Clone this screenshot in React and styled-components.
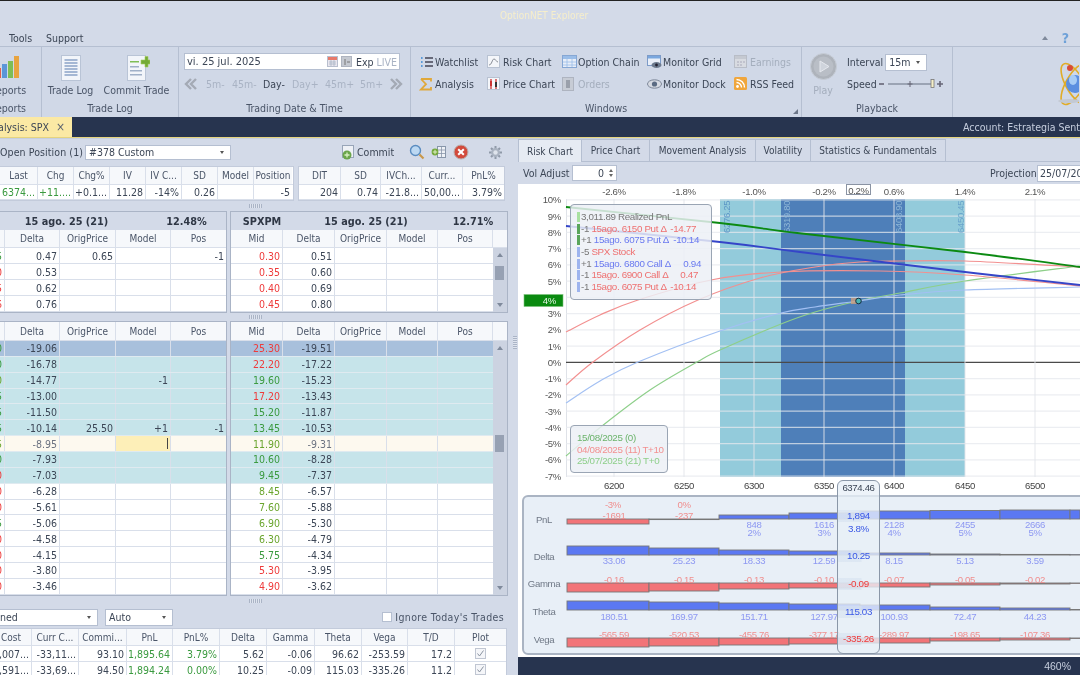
import React from "react";
import styled, { createGlobalStyle } from "styled-components";

const UI = `"DejaVu Sans Condensed", "DejaVu Sans", "Liberation Sans", sans-serif`;
const ARIAL = `"Liberation Sans", Arial, sans-serif`;
const BG = "#d3dae8";
const NAVY = "#27344f";
const GREEN = "#3a9a3f";
const OLIVE = "#6aa52e";
const RED = "#ee3b3b";
const LINE = "#d9dfea";
const AXIS = 9.6;

const Global = createGlobalStyle`
  html, body { margin: 0; padding: 0; background: ${BG}; overflow: hidden; }
  * { box-sizing: border-box; }
`;

const Page = styled.div`
  width: 1080px; height: 675px; overflow: hidden; position: relative;
  display: flex; flex-direction: column; background: ${BG};
  font-family: ${UI}; font-stretch: condensed; font-size: 10.5px; color: #3c4656;
  filter: blur(0.35px);
`;
const TopEdge = styled.div`height: 1px; background: #222; flex: none;`;
const TitleBar = styled.div`
  height: 28px; flex: none; display: flex; align-items: center; justify-content: center;
  color: #f6eecb; font-size: 10px; padding-left: 8px;
`;
const MenuBar = styled.div`
  height: 17px; flex: none; display: flex; align-items: center; gap: 14px; padding: 0 11px 0 9px;
`;
const MenuSpacer = styled.div`flex: 1;`;
const Ribbon = styled.div`
  height: 71px; flex: none; display: flex; border-top: 1px solid #b5bfd1; background: #d0d8e7;
`;
const Group = styled.div`
  width: ${p => p.$w}px; flex: none; border-right: 1px solid ${p => (p.$open ? "transparent" : "#b5bfd1")}; display: flex; flex-direction: column;
  position: relative; overflow: hidden;
`;
const GroupBody = styled.div`flex: 1; display: flex; min-height: 0; padding-left: ${p => p.$pl || 0}px; padding-top: ${p => p.$pt || 0}px;`;
const GroupLabel = styled.div`
  height: 15px; flex: none; text-align: center; line-height: 14px; color: #4a5568; white-space: nowrap;
  margin-bottom: 1px;
  ${p => p.$clip && `display:flex; justify-content:flex-end; padding-right: 15px;`}
`;
const BigButton = styled.div`
  width: ${p => p.$w}px; flex: none; display: flex; flex-direction: column; align-items: center; gap: 3px; padding-top: 8px;
  white-space: nowrap; color: #4a5568;
`;
const ReportButton = styled(BigButton)`gap: 5px;`;
const ClipRight = styled.div`flex: 1; display: flex; justify-content: flex-end; overflow: hidden; padding-right: 3px;`;
const DateWrap = styled.div`display: flex; flex-direction: column; padding: 6px 0 0 5px; width: 100%;`;
const DateBox = styled.div`
  width: 216px; height: 17px; background: #fff; border: 1px solid #b5bfd1; display: flex; align-items: center;
  padding: 0 2px; gap: 3px; color: #3c4656; font-size: 11px;
`;
const Live = styled.span`color: #a9b3c4; font-size: 10.5px;`;
const Exp = styled.span`font-size: 10.5px; margin-left: 1px;`;
const Grow = styled.div`flex: 1;`;
const Stepper = styled.div`
  display: grid; grid-template-columns: 22px 26px 31px 29px 33px 35px 29px 20px; margin-top: 5px; height: 17px; align-items: center;
  justify-items: start; color: #a9b3c4; white-space: nowrap; margin-left: 0;
`;
const Step = styled.span`color: ${p => (p.$on ? "#3c4656" : "#a9b3c4")};`;
const WinGrid = styled.div`
  display: grid; grid-template-columns: 68px 75px 85px 87px 64px; grid-template-rows: 22px 22px;
  padding: 4px 0 0 8px; align-items: center;
`;
const WinItem = styled.div`
  display: flex; align-items: center; gap: 1px; white-space: nowrap; color: ${p => (p.$off ? "#a4aebd" : "#3c4656")};
`;
const Launcher = styled.div`
  position: absolute; right: 3px; bottom: 3px; width: 0; height: 0;
  border-left: 5px solid transparent; border-bottom: 5px solid #6d7789;
`;
const PlayCol = styled.div`
  width: 42px; display: flex; flex-direction: column; align-items: center; padding: 6px 0 0 0; color: #a4aebd; gap: 4px;
`;
const PlayRows = styled.div`padding: 6px 0 0 3px; display: flex; flex-direction: column; gap: 4px;`;
const PlayRow = styled.div`display: flex; align-items: center; gap: 2px; height: 18px; white-space: nowrap;`;
const Combo = styled.div`
  width: ${p => p.$w}px; height: ${p => p.$h || 17}px; background: #fff; border: 1px solid #b5bfd1; display: flex; align-items: center; justify-content: space-between;
  padding: 0 6px 0 3px; flex: none; white-space: nowrap; color: #3c4656; font-size: 10.5px;
`;
const Caret = styled.span`
  width: 0; height: 0; border-left: 2.5px solid transparent; border-right: 2.5px solid transparent; border-top: 3px solid #555;
`;
const NavBar = styled.div`
  height: 20px; flex: none; background: ${NAVY}; display: flex; justify-content: space-between; align-items: stretch; color: #c6cede;
`;
const NavTab = styled.div`
  width: 72px; background: #fbe9a4; color: #3c4656; display: flex; align-items: center; justify-content: flex-end;
  overflow: hidden; padding-right: 7px; gap: 7px; white-space: nowrap;
`;
const NavClose = styled.span`font-size: 12px; color: #5a6270;`;
const Account = styled.div`width: 117px; white-space: nowrap; line-height: 20px; overflow: hidden;`;
const GoldEdge = styled.div`height: 2px; flex: none; background: #e5d47f; border-bottom: 1px solid #c6cfdf;`;
const Main = styled.div`flex: 1; display: flex; min-height: 0;`;
const LeftPane = styled.div`width: 511px; flex: none; display: flex; flex-direction: column; overflow: hidden;`;
const VSplit = styled.div`
  width: 7px; flex: none; display: flex; align-items: center; justify-content: center; padding-bottom: 130px;
`;
const Grip = styled.div`
  width: ${p => (p.$v ? 4 : 13)}px; height: ${p => (p.$v ? 13 : 4)}px; flex: none;
  background: repeating-linear-gradient(${p => (p.$v ? "0deg" : "90deg")}, #aab4c6 0 1px, #dfe4ee 1px 2px);
`;
const PosBar = styled.div`
  height: 26px; flex: none; display: flex; align-items: center; white-space: nowrap; padding-right: 8px;
`;
const PosLabel = styled.span`width: 85px; flex: none; letter-spacing: 0.1px;`;
const CommitBtn = styled.div`display: flex; align-items: center; gap: 2px; margin-left: 109px; width: 63px; color: #3c4656;`;
const ToolIcons = styled.div`display: flex; align-items: center; gap: 6px; margin-left: 12px;`;
const Gear = styled.div`margin-left: 19px; display: flex;`;
const QuoteRow = styled.div`display: flex; gap: 4px; height: 35px; flex: none; margin-top: 1px;`;
const QuoteTable = styled.div`
  width: ${p => p.$w}px; flex: none; border: 1px solid #c3cbdb; ${p => p.$cut && "border-left: 0;"} background: #fff;
`;
const Row = styled.div`
  display: grid; grid-template-columns: ${p => p.$cols}; height: ${p => p.$h || 16}px;
  background: ${p => p.$bg || "#fff"}; border-bottom: 1px solid ${p => p.$line || LINE};
  color: ${p => p.$fg || "#3c4656"};
`;
const Cell = styled.div`
  display: flex; align-items: center; overflow: hidden; white-space: nowrap; justify-content: flex-end;
  padding: 0 2px; border-right: 1px solid ${LINE}; color: ${p => p.$c || "inherit"};
  background: ${p => p.$bg || "transparent"}; font-size: 10.5px; position: relative;
  &:last-child { border-right: 0; }
`;
const CenterCell = styled(Cell)`justify-content: center;`;
const HeadCell = styled(Cell)`
  justify-content: ${p => (p.$left ? "flex-start" : "center")}; background: #f6f8fb; color: #4a5568; padding: 0 1px; font-size: 10px;
`;
const HSplit = styled.div`
  height: ${p => p.$h}px; flex: none; display: flex; align-items: center; justify-content: center;
`;
const OptRow = styled.div`display: flex; gap: 3px; flex: none; margin-left: -1px;`;
const OptPanel = styled.div`
  width: ${p => p.$w}px; flex: none; border: 1px solid #aab4c6; overflow: hidden; display: flex; flex-direction: column; background: #fff;
  ${p => p.$h && `height: ${p.$h}px;`}
`;
const OptTitle = styled.div`
  height: 18px; flex: none; background: #d3dae8; display: grid; grid-template-columns: ${p => p.$cols};
  font-weight: 700; color: #2f3745; align-items: center; justify-items: center; white-space: nowrap; font-size: 10.8px;
`;
const OptPct = styled.span`padding-left: ${p => p.$pl || 0}px;`;
const ScrollWrap = styled.div`display: flex; flex: 1; min-height: 0;`;
const Rows = styled.div`flex: 1; min-width: 0;`;
const Scroll = styled.div`
  width: 14px; flex: none; background: #ccd3e1; display: flex; flex-direction: column; align-items: center; justify-content: space-between;
  padding: 5px 0; position: relative;
`;
const Thumb = styled.div`
  position: absolute; left: 2px; width: 9px; background: #97a1b3; top: ${p => p.$top}px; height: ${p => p.$h}px;
`;
const ArrowUp = styled.span`
  width: 0; height: 0; border-left: 3.5px solid transparent; border-right: 3.5px solid transparent; border-bottom: 4px solid #7f8a9c;
`;
const ArrowDown = styled.span`
  width: 0; height: 0; border-left: 3.5px solid transparent; border-right: 3.5px solid transparent; border-top: 4px solid #7f8a9c;
`;
const Caretline = styled.span`
  position: absolute; right: 2px; top: 2px; bottom: 2px; width: 1px; background: #444;
`;
const BottomBar = styled.div`
  height: 22px; flex: none; display: flex; align-items: center; gap: 7px; padding-right: 7px; white-space: nowrap;
`;
const ClippedCombo = styled(Combo)`margin-left: -1px; padding-left: 0;`;
const IgnoreWrap = styled.label`margin-left: auto; display: flex; align-items: center; gap: 3px; color: #4a5568; letter-spacing: 0.35px;`;
const CheckBox = styled.span`
  width: 10px; height: 10px; background: #fff; border: 1px solid #b5bfd1; flex: none; display: inline-block;
`;
const BottomTable = styled.div`width: 507px; border: 1px solid #c3cbdb; border-left: 0; background: #fff; flex: none;`;
const RightPane = styled.div`flex: 1; min-width: 0; display: flex; flex-direction: column; background: ${BG};`;
const Tabs = styled.div`display: flex; height: 23px; flex: none; border-bottom: 1px solid #b5bfd1;`;
const Tab = styled.div`
  width: ${p => p.$w}px; flex: none; display: flex; align-items: center; justify-content: center; white-space: nowrap;
  background: ${p => (p.$on ? "#e6ebf3" : "#d3dae8")}; border: 1px solid #b5bfd1; border-left: ${p => (p.$on ? "1px solid #b5bfd1" : "0")};
  border-bottom: 0; color: #3c4656; height: ${p => (p.$on ? 23 : 22)}px; font-size: 10px; margin-bottom: -1px;
`;
const ChartBar = styled.div`
  height: 22px; flex: none; display: flex; align-items: center; padding-left: 5px; white-space: nowrap; overflow: hidden;
`;
const VolLabel = styled.span`width: 49px; flex: none;`;
const Spin = styled.div`
  width: 45px; height: 16px; background: #fff; border: 1px solid #b5bfd1; display: flex; align-items: center; justify-content: flex-end;
  padding-right: 3px; gap: 5px; flex: none;
`;
const SpinArrows = styled.span`display: flex; flex-direction: column; gap: 2px;`;
const TinyUp = styled.span`width: 0; height: 0; border-left: 2.5px solid transparent; border-right: 2.5px solid transparent; border-bottom: 3px solid #666; display: block;`;
const TinyDown = styled.span`width: 0; height: 0; border-left: 2.5px solid transparent; border-right: 2.5px solid transparent; border-top: 3px solid #666; display: block;`;
const ProjLabel = styled.span`margin-left: 373px; width: 47px; flex: none;`;
const ProjBox = styled.div`
  width: 80px; height: 17px; background: #fff; border: 1px solid #b5bfd1; padding-left: 2px; line-height: 15px; flex: none; color: #3c4656;
`;
const ChartStack = styled.div`position: relative; flex: 1; min-height: 0; display: flex; flex-direction: column; background: #fff;`;
const ChartSvg = styled.svg`width: 562px; height: 307px; display: block; flex: none; font-family: ${ARIAL}; letter-spacing: -0.35px;`;
const StripPanel = styled.div`
  height: 160px; margin: 4px 0 0 4px; width: 600px; flex: none; border: 2px solid #aab4c3; border-radius: 6px; background: #e8eff7; overflow: hidden;
`;
const StripSvg = styled.svg`width: 596px; height: 156px; display: block; font-family: ${ARIAL}; letter-spacing: -0.35px;`;
const StatusBar = styled.div`
  position: absolute; left: 0; right: 0; bottom: 0; height: 18px; background: ${NAVY}; color: #c6cede; display: flex; align-items: center; justify-content: flex-end;
  padding-right: 9px; font-family: ${ARIAL}; font-size: 10.5px;
`;
const Legend = styled.div`
  position: absolute; left: ${p => p.$l}px; top: ${p => p.$t}px; width: ${p => p.$w}px; height: ${p => p.$h}px;
  background: rgba(236, 240, 246, 0.84); border: 1px solid #9aa5b4; border-radius: 4px; padding: 6px 6px 0 6px;
  font-family: ${ARIAL}; font-size: 9.8px; letter-spacing: -0.35px; line-height: 11.7px; white-space: nowrap; color: #777;
`;
const LegendRow = styled.div`display: flex; height: 11.7px; align-items: center;`;
const LegendBar = styled.span`width: 3px; height: 10px; background: ${p => p.$c}; margin-right: 1px; flex: none;`;
const LegendVal = styled.span`margin-left: auto; color: ${p => p.$c}; padding-right: ${p => p.$pr || 0}px;`;
const Tone = styled.span`color: ${p => p.$c}; white-space: pre;`;
const Lens = styled.div`
  position: absolute; left: 319px; top: 296px; width: 43px; height: 174px;
  background: rgba(232, 239, 247, 0.78); border: 1px solid #8a97a8; border-radius: 6px; font-family: ${ARIAL};
  text-align: center; display: flex; flex-direction: column; letter-spacing: -0.35px;
`;
const LensHead = styled.div`font-size: 9.6px; color: #3c4656; line-height: 13px;`;
const LensVal = styled.div`
  position: absolute; left: 0; right: 0; top: ${p => p.$t}px; height: 12px; line-height: 12px; font-size: 9.8px;
  color: ${p => p.$c};
  ${p => p.$band && `background: linear-gradient(90deg, rgba(214, 226, 240, 0.6), rgba(214, 226, 240, 0.6) 55%, rgba(214, 226, 240, 0) 60%);`}
`;

/* ---------- icons ---------- */
const IconSvg = styled.svg`flex: none; display: block;`;
const Ico = ({ s = 14, w, h, children }) => (
  <IconSvg width={w || s} height={h || s} viewBox={`0 0 ${w || s} ${h || s}`}>{children}</IconSvg>
);
const ReportsIcon = () => (
  <Ico w={24} h={24}>
    <rect x="0" y="13" width="5" height="10" fill="#e0604c" /><rect x="6" y="9" width="5" height="14" fill="#5b96d8" />
    <rect x="12" y="6" width="5" height="17" fill="#7fbe56" /><rect x="18" y="1" width="5" height="22" fill="#e8a440" />
  </Ico>
);
const DocIcon = ({ plus }) => (
  <Ico w={26} h={26}>
    <rect x="3.5" y="0.5" width={plus ? 18 : 19} height="25" fill="#f2f5fa" stroke="#b9c4d6" />
    {plus
      ? <><rect x="6" y="6" width="9" height="1.5" fill="#7fbe56" /><rect x="6" y="11" width="9" height="1.5" fill="#9fb0c8" /><rect x="6" y="15" width="12" height="1.5" fill="#9fb0c8" /><rect x="6" y="19" width="12" height="1.5" fill="#9fb0c8" /><path d="M17 5h4V1.5h3V5h2v4h-2v3h-3V9h-4z" fill="#74ab35" stroke="#a6cc5c" strokeWidth=".6" /></>
      : [4, 7, 10, 13, 16, 19].map(y => <rect key={y} x="6.5" y={y} width="13" height="2" fill="#a4b7d4" />)}
  </Ico>
);
const MiniCal = () => (<Ico w={11} h={11}><rect x=".5" y=".5" width="10" height="10" fill="#e9e6ee" stroke="#b8bfce" /><rect x="1" y="1" width="9" height="3" fill="#e87a6a" /><path d="M2 6h7M2 8h7M4 4v6M7 4v6" stroke="#9ab" strokeWidth=".6" /></Ico>);
const MiniBox = () => (<Ico w={11} h={11}><rect x=".5" y=".5" width="10" height="10" fill="#c5c9d1" stroke="#aeb4c0" /><path d="M4 3v6M6 6h3" stroke="#777" /></Ico>);
const Chev = ({ flip }) => (
  <Ico w={14} h={12}><g transform={flip ? "translate(14,0) scale(-1,1)" : ""} fill="none" stroke="#a4aaB5" strokeWidth="2.4"><path d="M7 1 2 6l5 5" /><path d="M12 1 7 6l5 5" /></g></Ico>
);
const Win = ({ k }) => {
  const m = {
    list: <><path d="M6 3h8M6 7h8M6 11h8" stroke="#445" strokeWidth="1.3" /><path d="M2 3h2M2 7h2M2 11h2" stroke="#5a9ad8" strokeWidth="2" strokeDasharray="1.2 .4" /></>,
    sigma: <path d="M2 2h10v2.5M2 2l5 5.2-5 5.3h10V10" fill="none" stroke="#e0a83a" strokeWidth="1.8" />,
    risk: <><rect x=".5" y=".5" width="12" height="12" fill="#f4f6fa" stroke="#b8c2d2" /><path d="M2 10c3 0 3-6 5-6s2 3 4 3" fill="none" stroke="#8a8f98" /></>,
    price: <><rect x=".5" y=".5" width="12" height="12" fill="#f4f6fa" stroke="#b8c2d2" /><path d="M4 2v10M9 2v10" stroke="#c33" strokeWidth="1.3" /><rect x="3" y="4" width="2" height="5" fill="#c33" /><rect x="8" y="5" width="2" height="5" fill="#333" /></>,
    chain: <><rect x=".5" y=".5" width="14" height="12" fill="#e8eef8" stroke="#86a7d4" /><rect x="1" y="1" width="13" height="3" fill="#9abde8" /><path d="M1 7h13M1 10h13M5 4v8M10 4v8" stroke="#9abde8" strokeWidth=".8" /></>,
    orders: <><rect x=".5" y=".5" width="11" height="13" fill="#c7ccd5" stroke="#aeb4c0" /><rect x="4" y="3" width="4" height="8" fill="#9aa0ab" /></>,
    mgrid: <><rect x=".5" y=".5" width="13" height="10" fill="#e8eef8" stroke="#7c9bc8" /><rect x="1" y="1" width="12" height="2.5" fill="#7aa7de" /><ellipse cx="9.5" cy="10" rx="5" ry="3" fill="#6c7a8e" /><circle cx="9.5" cy="10" r="1.4" fill="#223" /></>,
    mdock: <><ellipse cx="7.5" cy="7" rx="7" ry="4.2" fill="#d6dae2" stroke="#7b8698" /><circle cx="7.5" cy="7" r="2.6" fill="#5a6a82" /></>,
    earn: <><rect x=".5" y=".5" width="12" height="12" fill="#d8dbe1" stroke="#b8bdc7" /><rect x="1" y="1" width="11" height="3" fill="#c5c9d1" /><path d="M3 7h2M6 7h2M9 7h2M3 10h2M6 10h2" stroke="#aab" /></>,
    rss: <><rect width="13" height="13" rx="1.5" fill="#f0a63c" /><circle cx="3.5" cy="9.5" r="1.4" fill="#fff" /><path d="M2.5 5.5a5 5 0 0 1 5 5M2.5 2.5a8 8 0 0 1 8 8" fill="none" stroke="#fff" strokeWidth="1.4" /></>,
  };
  return <Ico s={15}>{m[k]}</Ico>;
};
const PlayIcon = () => (
  <Ico s={27}>
    <circle cx="13.5" cy="13.5" r="13" fill="#aeb3bb" stroke="#c6ccd6" />
    <circle cx="13.5" cy="13.5" r="10" fill="#b9bec6" />
    <path d="M10 8l9 5.5-9 5.5z" fill="#cfd4dc" stroke="#e5e8ee" />
  </Ico>
);
const Slider = () => (
  <Ico w={66} h={12}>
    <path d="M0 6h5" stroke="#667" strokeWidth="1.6" />
    <path d="M9 6h44" stroke="#8a93a3" strokeWidth="1.6" />
    <path d="M31 3v6M28.5 6h5" stroke="#667" />
    <rect x="52" y="1.5" width="3" height="8" fill="#f5efc8" stroke="#777" strokeWidth=".8" />
    <path d="M61 3v6M58 6h6" stroke="#667" strokeWidth="1.6" />
  </Ico>
);
const Atom = () => (
  <Ico w={42} h={48}>
    <g fill="none" stroke="#e0ac28" strokeWidth="1.6">
      <ellipse cx="22" cy="26" rx="9" ry="23" transform="rotate(-30 22 26)" />
      <ellipse cx="22" cy="26" rx="9" ry="23" transform="rotate(30 22 26)" />
    </g>
    <circle cx="22" cy="26" r="9" fill="#5c8fe0" />
    <ellipse cx="20" cy="22" rx="4" ry="5" fill="#a8ccf5" />
    <circle cx="17" cy="10" r="3" fill="#d84a3a" />
    <ellipse cx="16" cy="43" rx="11" ry="2" fill="#c3c9d3" />
  </Ico>
);
const CommitIcon = () => (
  <Ico s={15}>
    <rect x="2.5" y=".5" width="11" height="12" fill="#eef1f6" stroke="#98a5b8" />
    <circle cx="7" cy="10" r="4.5" fill="#6aa54a" />
    <path d="M7 7.5v5M4.5 10h5" stroke="#d8f0c0" strokeWidth="1.3" />
  </Ico>
);
const Magnify = () => (<Ico s={16}><circle cx="6.5" cy="6.5" r="5" fill="#bcd8f2" stroke="#5a8cc0" strokeWidth="1.4" /><path d="M10.5 10.5l4 4" stroke="#c9974a" strokeWidth="2.2" /></Ico>);
const ColsIcon = () => (<Ico s={16}><rect x="6.5" y="2.5" width="8" height="11" fill="#eef1f6" stroke="#8896aa" /><path d="M10.5 3v10M7 6h7M7 9.5h7" stroke="#8896aa" strokeWidth=".8" /><circle cx="4" cy="8" r="3.4" fill="#74a83c" /><path d="M4 5.8v4.4M1.8 8h4.4" stroke="#dff0c4" /></Ico>);
const XIcon = () => (<Ico s={16}><circle cx="8" cy="8" r="7" fill="#d24a3c" stroke="#b9b0ae" /><path d="M5.2 5.2l5.6 5.6M10.8 5.2l-5.6 5.6" stroke="#fff" strokeWidth="2" /></Ico>);
const GearIcon = () => (<Ico s={15}><g stroke="#8f99a8" strokeWidth="2"><path d="M7.5 1v13M1 7.5h13M3 3l9 9M12 3l-9 9" /></g><circle cx="7.5" cy="7.5" r="4.4" fill="#aab3c1" /><circle cx="7.5" cy="7.5" r="2.2" fill="#dfe4ec" /></Ico>);
const HelpMark = styled.span`color: #6ea1d8; font-weight: 700; font-size: 14px; line-height: 14px;`;
const Check = () => (<Ico s={11}><rect x=".5" y=".5" width="10" height="10" fill="#f5f6f9" stroke="#c0c6d2" /><path d="M2.5 5.5l2 2.5 4-5.5" fill="none" stroke="#8a93a0" /></Ico>);

/* ---------- table data ---------- */
const QCOLS = "38px 36px 36px 36px 36px 36px 36px 38px";
const QCOLS2 = "42px 40px 41px 41px 41px";
const LCOLS = "5px 55px 56px 55px 55px";
const RCOLS = "52px 52px 52px 51px 55px 14px";
const RROW = "52px 52px 52px 51px 55px";
const CREAM = "#fdf9ef";

const up = [
  ["5", GREEN, "0.47", "0.65", "-1", "0.30", "0.51"],
  ["0", RED, "0.53", "", "", "0.35", "0.60"],
  ["5", RED, "0.62", "", "", "0.40", "0.69"],
  ["6", RED, "0.76", "", "", "0.45", "0.80"],
];
const lo = [
  ["0", GREEN, "-19.06", "25.30", RED, "-19.51", "#a8c0dc"],
  ["0", GREEN, "-16.78", "22.20", RED, "-17.22", "#c6e4ea"],
  ["0", OLIVE, "-14.77", "19.60", GREEN, "-15.23", "#c6e4ea"],
  ["5", GREEN, "-13.00", "17.20", RED, "-13.43", "#c6e4ea"],
  ["5", GREEN, "-11.50", "15.20", GREEN, "-11.87", "#c6e4ea"],
  ["5", GREEN, "-10.14", "13.45", GREEN, "-10.53", "#c6e4ea"],
  ["5", OLIVE, "-8.95", "11.90", OLIVE, "-9.31", CREAM],
  ["0", GREEN, "-7.93", "10.60", GREEN, "-8.28", "#c6e4ea"],
  ["0", RED, "-7.03", "9.45", GREEN, "-7.37", "#c6e4ea"],
  ["0", RED, "-6.28", "8.45", OLIVE, "-6.57"],
  ["0", RED, "-5.61", "7.60", OLIVE, "-5.88"],
  ["5", GREEN, "-5.06", "6.90", OLIVE, "-5.30"],
  ["0", RED, "-4.58", "6.30", OLIVE, "-4.79"],
  ["0", RED, "-4.15", "5.75", GREEN, "-4.34"],
  ["0", RED, "-3.80", "5.30", RED, "-3.95"],
  ["0", RED, "-3.46", "4.90", RED, "-3.62"],
];
const BCOLS = "32px 47px 48px 46px 47px 47px 48px 47px 46px 47px 51px";
const LOW_ROW = 15.87;

/* ---------- chart ---------- */
const Y = p => 362.3 - 16.25 * p;
const spline = pts => {
  let d = `M${pts[0][0]} ${pts[0][1]}`;
  for (let i = 0; i < pts.length - 1; i++) {
    const p0 = pts[i - 1] || pts[i], p1 = pts[i], p2 = pts[i + 1], p3 = pts[i + 2] || p2;
    d += `C${p1[0] + (p2[0] - p0[0]) / 6} ${p1[1] + (p2[1] - p0[1]) / 6} ${p2[0] - (p3[0] - p1[0]) / 6} ${p2[1] - (p3[1] - p1[1]) / 6} ${p2[0]} ${p2[1]}`;
  }
  return d;
};
const curves = [
  { c: "#8ecf8a", w: 1.2, p: [[566, 456], [602, 426], [650, 390], [697, 362], [720, 350], [781, 324], [815, 312], [858, 301], [900, 293], [965, 281], [1080, 266]] },
  { c: "#a3c0f3", w: 1.2, p: [[566, 403], [600, 381], [638, 362], [720, 331], [781, 313], [815, 307], [858, 301], [900, 295], [965, 290], [1080, 287]] },
  { c: "#f29090", w: 1.2, p: [[566, 385], [593, 362], [640, 330], [698, 300], [760, 278], [815, 267], [860, 262], [900, 261], [965, 261], [1080, 267]] },
  { c: "#f29090", w: 1.2, p: [[566, 332], [600, 315], [638, 300], [711, 280], [781, 272], [880, 271], [965, 275], [1080, 286]] },
  { c: "#3545c8", w: 1.8, p: [[566, 226], [720, 242], [800, 252], [965, 272], [1080, 285]] },
  { c: "#0c8a12", w: 1.8, p: [[566, 207], [720, 223], [781, 231], [815, 235], [965, 252], [1080, 267]] },
];
const yTicks = Array.from({ length: 18 }, (_, i) => 10 - i).filter(v => v !== 4);
const xTicks = [[614, "6200"], [684, "6250"], [754, "6300"], [824, "6350"], [894, "6400"], [965, "6450"], [1035, "6500"]];
const topTicks = [[614, "-2.6%"], [684, "-1.8%"], [754, "-1.0%"], [824, "-0.2%"], [894, "0.6%"], [965, "1.4%"], [1035, "2.1%"]];
const bandLabels = [[730, "6276.25", "#5c96c6"], [790, "6319.80", "#8db6d6"], [902, "6408.90", "#8db6d6"], [964, "6450.45", "#6aa4cc"]];

const Chart = () => (
  <ChartSvg viewBox="518 184 562 307">
    <rect x="518" y="184" width="562" height="307" fill="#fff" />
    <path d="M566.5 199v278" stroke="#dfe2e8" />
    <rect x="720" y="199" width="245" height="278" fill="#93cbdb" />
    <rect x="781" y="199" width="124" height="278" fill="#4e7fb9" />
    {Array.from({ length: 18 }, (_, i) => (
      <path key={i} d={`M566 ${Y(10 - i)}H1080`} stroke={i === 10 ? "#4a4a4a" : "#e6e8ed"} strokeOpacity={i === 10 ? 1 : 0.75} strokeWidth="1.2" />
    ))}
    {xTicks.map(([x]) => <path key={x} d={`M${x} 199V477`} stroke="#e2e4ea" strokeOpacity=".75" strokeWidth="1.2" />)}
    {bandLabels.map(([x, t, c]) => (
      <text key={t} x={x} y={233} transform={`rotate(-90 ${x} 233)`} fontSize={AXIS} fill={c}>{t}</text>
    ))}
    {yTicks.map(v => <text key={v} x={561} y={Y(v) + 3.5} textAnchor="end" fontSize={AXIS} fill="#555">{v}%</text>)}
    {topTicks.map(([x, t]) => <text key={x} x={x} y={194.5} textAnchor="middle" fontSize={AXIS} fill="#555">{t}</text>)}
    <rect x="846.5" y="184.5" width="24" height="10" fill="#fff" stroke="#8a93a3" />
    <text x={858.5} y={193.5} textAnchor="middle" fontSize={AXIS} fill="#555">0.2%</text>
    {xTicks.map(([x, t]) => <text key={t} x={x} y={488.5} textAnchor="middle" fontSize={AXIS} fill="#444">{t}</text>)}
    {curves.map((c, i) => <path key={i} d={spline(c.p)} fill="none" stroke={c.c} strokeWidth={c.w} />)}
    <rect x="851" y="298" width="6" height="6" fill="#d0a080" fillOpacity=".8" />
    <circle cx="858.5" cy="301" r="2.8" fill="#48b4b4" stroke="#123" strokeWidth=".9" />
    <rect x="524" y="294.5" width="39" height="12" fill="#0a8a10" stroke="#7cc47c" strokeWidth=".6" />
    <text x={556} y={304} textAnchor="end" fontSize={AXIS} fill="#e8f5e8">4%</text>
  </ChartSvg>
);

const edges = [567, 649, 719, 789, 860, 930, 1000, 1070, 1080];
const BLUE_BAR = "#5b78f2", RED_BAR = "#f27478", BLUE_TXT = "#8d98f2", RED_TXT = "#f08e8e";
const strips = [
  { kind: "signed", base: 519, vals: [5, 0.6, -4, -6, -8, -8.5, -9, -9] },
  { kind: "down", base: 555, color: BLUE_BAR, h: [9, 7, 5, 4, 2, 1, 0.6, 0.4], up: true },
  { kind: "dn", base: 583, color: RED_BAR, h: [9, 8, 6, 5, 4, 2, 1, 0.4] },
  { kind: "down", base: 610, color: BLUE_BAR, h: [9, 8, 7, 6, 5, 3, 2, 0.5], up: true },
  { kind: "dn", base: 638, color: RED_BAR, h: [9, 8, 7, 6, 5, 3, 2, 0.5] },
];
const rowsTxt = [
  { y: 507.5, c: RED_TXT, t: [[613, "-3%"], [684, "0%"]] },
  { y: 518.5, c: RED_TXT, t: [[614, "-1691"], [684, "-237"]] },
  { y: 527.5, c: BLUE_TXT, t: [[754, "848"], [824, "1616"], [894, "2128"], [965, "2455"], [1035, "2666"]] },
  { y: 535.5, c: BLUE_TXT, t: [[754, "2%"], [824, "3%"], [894, "4%"], [965, "5%"], [1035, "5%"]] },
  { y: 564, c: BLUE_TXT, t: [[614, "33.06"], [684, "25.23"], [754, "18.33"], [824, "12.59"], [894, "8.15"], [965, "5.13"], [1035, "3.59"]] },
  { y: 582.5, c: RED_TXT, t: [[614, "-0.16"], [684, "-0.15"], [754, "-0.13"], [824, "-0.10"], [894, "-0.07"], [965, "-0.05"], [1035, "-0.02"]] },
  { y: 619.5, c: BLUE_TXT, t: [[614, "180.51"], [684, "169.97"], [754, "151.71"], [824, "127.97"], [894, "100.93"], [965, "72.47"], [1035, "44.23"]] },
  { y: 637.5, c: RED_TXT, t: [[614, "-565.59"], [684, "-520.53"], [754, "-455.76"], [824, "-377.17"], [894, "-289.97"], [965, "-198.65"], [1035, "-107.36"]] },
];
const labels = [[544, 522.5, "PnL"], [544, 559.5, "Delta"], [544, 586.5, "Gamma"], [544, 614.5, "Theta"], [544, 642.5, "Vega"]];

const Strip = () => (
  <StripSvg viewBox="524 497 596 156">
    {labels.map(([x, y, t]) => <text key={t} x={x} y={y} textAnchor="middle" fontSize={AXIS} fill="#6f7886">{t}</text>)}
    {strips.map((s, i) => edges.slice(0, -1).map((x0, j) => {
      const x1 = edges[j + 1];
      if (s.kind === "signed") {
        const v = s.vals[j];
        const y = v > 0 ? s.base : s.base + v;
        return <rect key={j} x={x0} y={y} width={x1 - x0} height={Math.abs(v)} fill={v > 0 ? RED_BAR : BLUE_BAR} stroke="#777" strokeWidth=".9" />;
      }
      const h = s.h[j];
      return <rect key={j} x={x0} y={s.up ? s.base - h : s.base} width={x1 - x0} height={h} fill={s.color} stroke="#777" strokeWidth=".9" />;
    }))}
    {rowsTxt.map(r => r.t.map(([x, t]) => <text key={t + r.y} x={x} y={r.y} textAnchor="middle" fontSize={AXIS} fill={r.c}>{t}</text>))}
  </StripSvg>
);

const legendRows = [
  ["#a8e0a0", "#777", "3,011.89 Realized PnL"],
  ["#5aa55a", "#777", "-1 ", "15ago. 6150 Put Δ", "#ee7070", "-14.77", 9],
  ["#5aa55a", "#777", "+1 ", "15ago. 6075 Put Δ", "#6a7af0", "-10.14", 6],
  ["#9db4ee", "#777", "-5 ", "SPX Stock", "#ee7070"],
  ["#9db4ee", "#777", "+1 ", "15ago. 6800 Call Δ", "#6a7af0", "0.94", 4],
  ["#9db4ee", "#777", "-1 ", "15ago. 6900 Call Δ", "#ee7070", "0.47", 7],
  ["#9db4ee", "#777", "-1 ", "15ago. 6075 Put Δ", "#ee7070", "-10.14", 9],
];

export default function App() {
  return (
    <>
      <Global />
      <Page>
        <TopEdge />
        <TitleBar>OptionNET Explorer</TitleBar>
        <MenuBar>
          <span>Tools</span><span>Support</span><MenuSpacer />
          <ArrowUp /><HelpMark>?</HelpMark>
        </MenuBar>
        <Ribbon>
          <Group $w={42}>
            <GroupBody>
              <ClipRight>
                <ReportButton $w={60}><ReportsIcon /><span>Reports</span></ReportButton>
              </ClipRight>
            </GroupBody>
            <GroupLabel $clip><span>Reports</span></GroupLabel>
          </Group>
          <Group $w={137}>
            <GroupBody>
              <BigButton $w={57}><DocIcon /><span>Trade Log</span></BigButton>
              <BigButton $w={75}><DocIcon plus /><span>Commit Trade</span></BigButton>
            </GroupBody>
            <GroupLabel>Trade Log</GroupLabel>
          </Group>
          <Group $w={232}>
            <GroupBody>
              <DateWrap>
                <DateBox>vi. 25 jul. 2025<Grow /><MiniCal /><MiniBox /><Exp>Exp</Exp><Live>LIVE</Live></DateBox>
                <Stepper>
                  <Chev /><Step>5m-</Step><Step>45m-</Step><Step $on>Day-</Step><Step>Day+</Step><Step>45m+</Step><Step>5m+</Step><Chev flip />
                </Stepper>
              </DateWrap>
            </GroupBody>
            <GroupLabel>Trading Date &amp; Time</GroupLabel>
          </Group>
          <Group $w={391}>
            <GroupBody>
              <WinGrid>
                <WinItem><Win k="list" />Watchlist</WinItem>
                <WinItem><Win k="risk" />Risk Chart</WinItem>
                <WinItem><Win k="chain" />Option Chain</WinItem>
                <WinItem><Win k="mgrid" />Monitor Grid</WinItem>
                <WinItem $off><Win k="earn" />Earnings</WinItem>
                <WinItem><Win k="sigma" />Analysis</WinItem>
                <WinItem><Win k="price" />Price Chart</WinItem>
                <WinItem $off><Win k="orders" />Orders</WinItem>
                <WinItem><Win k="mdock" />Monitor Dock</WinItem>
                <WinItem><Win k="rss" />RSS Feed</WinItem>
              </WinGrid>
            </GroupBody>
            <GroupLabel>Windows</GroupLabel>
            <Launcher />
          </Group>
          <Group $w={151}>
            <GroupBody>
              <PlayCol><PlayIcon /><span>Play</span></PlayCol>
              <PlayRows>
                <PlayRow>Interval<Combo $w={42}>15m<Caret /></Combo></PlayRow>
                <PlayRow>Speed<Slider /></PlayRow>
              </PlayRows>
            </GroupBody>
            <GroupLabel>Playback</GroupLabel>
          </Group>
          <Group $w={127} $open>
            <GroupBody $pl={100} $pt={11}><Atom /></GroupBody>
          </Group>
        </Ribbon>
        <NavBar>
          <NavTab><span>Analysis: SPX</span><NavClose>×</NavClose></NavTab>
          <Account>Account: Estrategia Sentinel</Account>
        </NavBar>
        <GoldEdge />
        <Main>
          <LeftPane>
            <PosBar>
              <PosLabel>Open Position (1)</PosLabel>
              <Combo $w={146} $h={15}>#378 Custom<Caret /></Combo>
              <CommitBtn><CommitIcon />Commit</CommitBtn>
              <ToolIcons><Magnify /><ColsIcon /><XIcon /></ToolIcons>
              <Gear><GearIcon /></Gear>
            </PosBar>
            <QuoteRow>
              <QuoteTable $w={294} $cut>
                <Row $cols={QCOLS} $h={18}>
                  {["Last", "Chg", "Chg%", "IV", "IV C...", "SD", "Model", "Position"].map(t => <HeadCell key={t}>{t}</HeadCell>)}
                </Row>
                <Row $cols={QCOLS} $h={15}>
                  <Cell $c={GREEN}>6374...</Cell><Cell $c={GREEN}>+11....</Cell><Cell>+0.1...</Cell><Cell>11.28</Cell><Cell>-14%</Cell><Cell>0.26</Cell><Cell /><Cell>-5</Cell>
                </Row>
              </QuoteTable>
              <QuoteTable $w={207}>
                <Row $cols={QCOLS2} $h={18}>
                  {["DIT", "SD", "IVCh...", "Curr...", "PnL%"].map(t => <HeadCell key={t}>{t}</HeadCell>)}
                </Row>
                <Row $cols={QCOLS2} $h={15}>
                  <Cell>204</Cell><Cell>0.74</Cell><Cell>-21.8...</Cell><Cell>50,00...</Cell><Cell>3.79%</Cell>
                </Row>
              </QuoteTable>
            </QuoteRow>
            <HSplit $h={10}><Grip /></HSplit>
            <OptRow>
              <OptPanel $w={228}>
                <OptTitle $cols="133px 93px"><span>15 ago. 25 (21)</span><OptPct $pl={14}>12.48%</OptPct></OptTitle>
                <Row $cols={LCOLS} $h={18}><HeadCell /><HeadCell>Delta</HeadCell><HeadCell>OrigPrice</HeadCell><HeadCell>Model</HeadCell><HeadCell>Pos</HeadCell></Row>
                {up.map(r => (
                  <Row key={r[2]} $cols={LCOLS}>
                    <Cell $c={r[1]}>{r[0]}</Cell><Cell>{r[2]}</Cell><Cell>{r[3]}</Cell><Cell /><Cell>{r[4]}</Cell>
                  </Row>
                ))}
              </OptPanel>
              <OptPanel $w={278}>
                <OptTitle $cols="62px 146px 68px"><span>SPXPM</span><span>15 ago. 25 (21)</span><OptPct>12.71%</OptPct></OptTitle>
                <Row $cols={RCOLS} $h={18}>
                  {["Mid", "Delta", "OrigPrice", "Model", "Pos", ""].map(t => <HeadCell key={t}>{t}</HeadCell>)}
                </Row>
                <ScrollWrap>
                  <Rows>
                    {up.map(r => (
                      <Row key={r[5]} $cols={RROW}>
                        <Cell $c={RED}>{r[5]}</Cell><Cell>{r[6]}</Cell><Cell /><Cell /><Cell />
                      </Row>
                    ))}
                  </Rows>
                  <Scroll><ArrowUp /><Thumb $top={18} $h={14} /><ArrowDown /></Scroll>
                </ScrollWrap>
              </OptPanel>
            </OptRow>
            <HSplit $h={8}><Grip /></HSplit>
            <OptRow>
              <OptPanel $w={228} $h={275}>
                <Row $cols={LCOLS} $h={19}><HeadCell /><HeadCell>Delta</HeadCell><HeadCell>OrigPrice</HeadCell><HeadCell>Model</HeadCell><HeadCell>Pos</HeadCell></Row>
                {lo.map((r, i) => (
                  <Row key={r[2]} $h={LOW_ROW} $cols={LCOLS} $bg={r[6]} $fg={r[6] === CREAM ? "#6b7280" : undefined} $line={r[6] ? "#dfeaf0" : LINE}>
                    <Cell $c={r[1]}>{r[0]}</Cell><Cell>{r[2]}</Cell>
                    <Cell>{i === 5 ? "25.50" : ""}</Cell>
                    <Cell $bg={i === 6 ? "#fdefb8" : undefined}>{i === 2 ? "-1" : i === 5 ? "+1" : ""}{i === 6 && <Caretline />}</Cell>
                    <Cell>{i === 5 ? "-1" : ""}</Cell>
                  </Row>
                ))}
              </OptPanel>
              <OptPanel $w={278} $h={275}>
                <Row $cols={RCOLS} $h={19}>
                  {["Mid", "Delta", "OrigPrice", "Model", "Pos", ""].map(t => <HeadCell key={t}>{t}</HeadCell>)}
                </Row>
                <ScrollWrap>
                  <Rows>
                    {lo.map(r => (
                      <Row key={r[3]} $h={LOW_ROW} $cols={RROW} $bg={r[6]} $fg={r[6] === CREAM ? "#6b7280" : undefined} $line={r[6] ? "#dfeaf0" : LINE}>
                        <Cell $c={r[4]}>{r[3]}</Cell><Cell>{r[5]}</Cell><Cell /><Cell /><Cell />
                      </Row>
                    ))}
                  </Rows>
                  <Scroll><ArrowUp /><Thumb $top={94} $h={17} /><ArrowDown /></Scroll>
                </ScrollWrap>
              </OptPanel>
            </OptRow>
            <HSplit $h={10}><Grip /></HSplit>
            <BottomBar>
              <ClippedCombo $w={99}><span>ned</span><Caret /></ClippedCombo>
              <Combo $w={68}>Auto<Caret /></Combo>
              <IgnoreWrap><CheckBox />Ignore Today's Trades</IgnoreWrap>
            </BottomBar>
            <BottomTable>
              <Row $cols={BCOLS} $h={17}>
                <HeadCell $left>Cost</HeadCell>
                {["Curr C...", "Commi...", "PnL", "PnL%", "Delta", "Gamma", "Theta", "Vega", "T/D", "Plot"].map(t => <HeadCell key={t}>{t}</HeadCell>)}
              </Row>
              <Row $cols={BCOLS}>
                <Cell>5,007...</Cell><Cell>-33,11...</Cell><Cell>93.10</Cell><Cell $c={GREEN}>1,895.64</Cell><Cell $c={GREEN}>3.79%</Cell><Cell>5.62</Cell><Cell>-0.06</Cell><Cell>96.62</Cell><Cell>-253.59</Cell><Cell>17.2</Cell>
                <CenterCell><Check /></CenterCell>
              </Row>
              <Row $cols={BCOLS}>
                <Cell>5,591...</Cell><Cell>-33,69...</Cell><Cell>94.50</Cell><Cell $c={GREEN}>1,894.24</Cell><Cell $c={GREEN}>0.00%</Cell><Cell>10.25</Cell><Cell>-0.09</Cell><Cell>115.03</Cell><Cell>-335.26</Cell><Cell>11.2</Cell>
                <CenterCell><Check /></CenterCell>
              </Row>
            </BottomTable>
          </LeftPane>
          <VSplit><Grip $v /></VSplit>
          <RightPane>
            <Tabs>
              <Tab $w={64} $on>Risk Chart</Tab>
              <Tab $w={68}>Price Chart</Tab>
              <Tab $w={106}>Movement Analysis</Tab>
              <Tab $w={55}>Volatility</Tab>
              <Tab $w={135}>Statistics &amp; Fundamentals</Tab>
            </Tabs>
            <ChartBar>
              <VolLabel>Vol Adjust</VolLabel>
              <Spin>0<SpinArrows><TinyUp /><TinyDown /></SpinArrows></Spin>
              <ProjLabel>Projection</ProjLabel>
              <ProjBox>25/07/2025</ProjBox>
            </ChartBar>
            <ChartStack>
              <Chart />
              <Legend $l={52} $t={20} $w={142} $h={96}>
                {legendRows.map((r, i) => (
                  <LegendRow key={i}>
                    <LegendBar $c={r[0]} />
                    <Tone $c={r[1]}>{r[2]}</Tone>
                    {r[3] && <Tone $c={r[4]}>{r[3]}</Tone>}
                    {r[5] && <LegendVal $c={r[4]} $pr={r[6]}>{r[5]}</LegendVal>}
                  </LegendRow>
                ))}
              </Legend>
              <Legend $l={52} $t={241} $w={98} $h={48}>
                <LegendRow><Tone $c="#6cb46c">15/08/2025 (0)</Tone></LegendRow>
                <LegendRow><Tone $c="#f29090">04/08/2025 (11) T+10</Tone></LegendRow>
                <LegendRow><Tone $c="#8ecf8a">25/07/2025 (21) T+0</Tone></LegendRow>
              </Legend>
              <StripPanel><Strip /></StripPanel>
              <Lens>
                <LensHead>6374.46</LensHead>
                <LensVal $t={29} $c="#3a58e6" $band>1,894</LensVal>
                <LensVal $t={42} $c="#3a58e6">3.8%</LensVal>
                <LensVal $t={69} $c="#3a58e6" $band>10.25</LensVal>
                <LensVal $t={97} $c={RED} $band>-0.09</LensVal>
                <LensVal $t={125} $c="#3a58e6" $band>115.03</LensVal>
                <LensVal $t={152} $c={RED} $band>-335.26</LensVal>
              </Lens>
              <StatusBar>460%</StatusBar>
            </ChartStack>
          </RightPane>
        </Main>
      </Page>
    </>
  );
}
